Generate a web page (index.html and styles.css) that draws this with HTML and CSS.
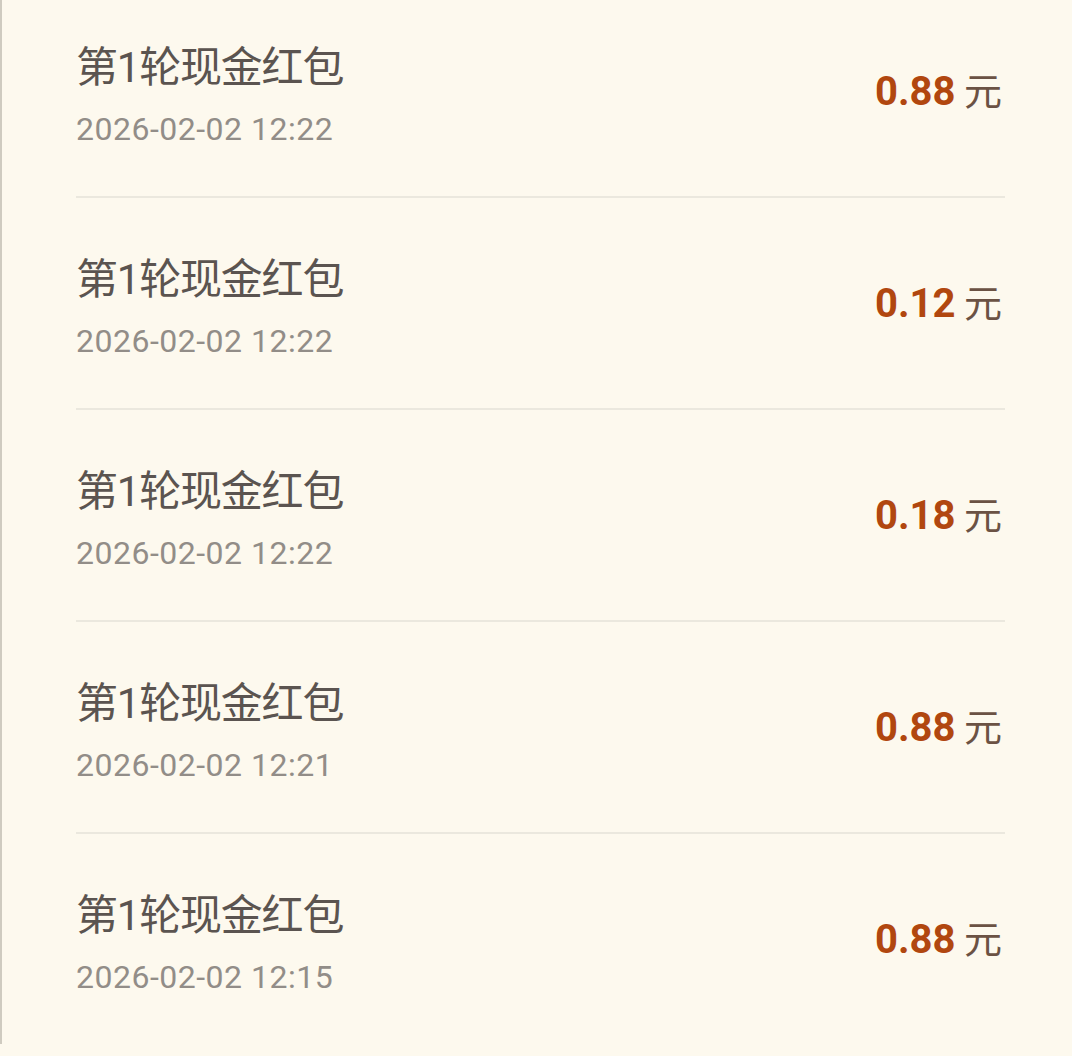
FILE: index.html
```html
<!DOCTYPE html>
<html lang="zh-CN">
<head>
    <meta charset="UTF-8">
    <meta name="viewport" content="width=device-width, initial-scale=1.0">
    <title>红包记录</title>
    <link rel="stylesheet" href="styles.css">
</head>
<body>
    <main class="page">
        <ul class="record-list">
            <li class="record">
                <div class="record-info">
                    <div class="record-title">第1轮现金红包</div>
                    <div class="record-time">2026-02-02 12:22</div>
                </div>
                <div class="record-amount"><b>0.88</b> 元</div>
            </li>
            <li class="record">
                <div class="record-info">
                    <div class="record-title">第1轮现金红包</div>
                    <div class="record-time">2026-02-02 12:22</div>
                </div>
                <div class="record-amount"><b>0.12</b> 元</div>
            </li>
            <li class="record">
                <div class="record-info">
                    <div class="record-title">第1轮现金红包</div>
                    <div class="record-time">2026-02-02 12:22</div>
                </div>
                <div class="record-amount"><b>0.18</b> 元</div>
            </li>
            <li class="record">
                <div class="record-info">
                    <div class="record-title">第1轮现金红包</div>
                    <div class="record-time">2026-02-02 12:21</div>
                </div>
                <div class="record-amount"><b>0.88</b> 元</div>
            </li>
            <li class="record">
                <div class="record-info">
                    <div class="record-title">第1轮现金红包</div>
                    <div class="record-time">2026-02-02 12:15</div>
                </div>
                <div class="record-amount"><b>0.88</b> 元</div>
            </li>
        </ul>
    </main>
</body>
</html>
```

FILE: styles.css
```css
/* Sayfa zemini */
html, body {
    margin: 0;
    padding: 0;
    height: 100%;
    background-color: #fdf9ee;
    overflow: hidden;
}

.page {
    min-height: 100%;
    border-left: 2px solid #cfcbc0;
    box-sizing: border-box;
}

.record-list {
    list-style: none;
    margin: -14px 67px 0 74px;
    padding: 0;
}

.record {
    display: flex;
    align-items: center;
    justify-content: space-between;
    height: 210px;
    border-bottom: 2px solid #ebe8de;
}

.record:last-child {
    border-bottom: none;
}

.record-info {
    padding-top: 14px; /* başlık biraz aşağıda */
}

.record-title {
    font-family: Roboto, "Noto Sans CJK SC", sans-serif;
    font-size: 42px;
    line-height: 60px;
    color: #5b5450;
    letter-spacing: -1.2px;
}

.record-time {
    font-family: Roboto, "Noto Sans", sans-serif;
    font-size: 32px;
    line-height: 60px;
    margin-top: 1px;
    color: #928d88;
    letter-spacing: 0.5px;
}

.record-amount {
    font-family: "Noto Sans CJK SC", sans-serif;
    font-size: 38px;
    color: #6b5244;
    margin: 0 3px 6px 0;
}

.record-amount b {
    font-family: Roboto, sans-serif;
    font-weight: 700;
    font-size: 40px;
    color: #b1470f;
}
```
